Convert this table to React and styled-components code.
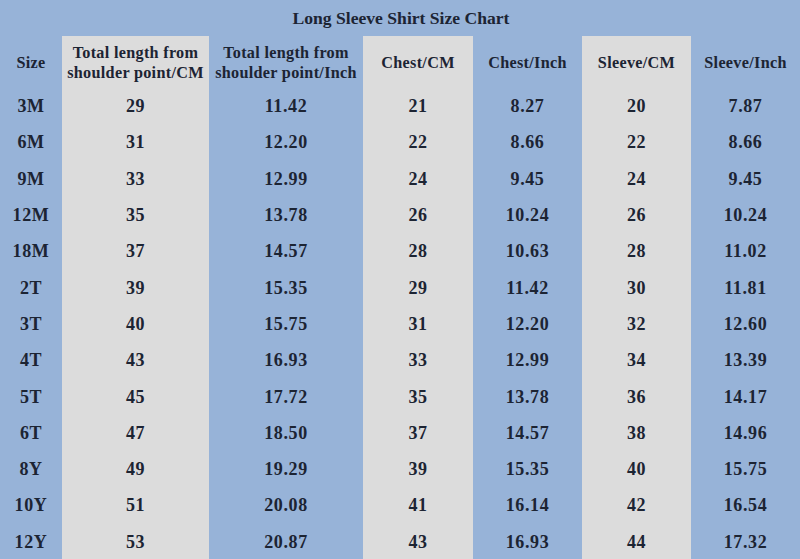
import React from "react";
import styled, { createGlobalStyle } from "styled-components";

const GlobalStyle = createGlobalStyle`
  html, body {
    margin: 0;
    padding: 0;
    background: #97b3d8;
  }
`;

const Chart = styled.div`
  width: 800px;
  height: 559px;
  background: #97b3d8;
  color: #1c2433;
  font-family: "Liberation Serif", "Times New Roman", serif;
  font-weight: bold;
  overflow: hidden;
`;

const Title = styled.div`
  height: 36px;
  display: flex;
  align-items: center;
  justify-content: center;
  font-size: 17.6px;
  padding-left: 2px;
  padding-top: 1px;
  box-sizing: border-box;
`;

const Grid = styled.div`
  display: grid;
  grid-template-columns: 62px 147px 154px 110px 109px 109px 109px;
  grid-template-rows: 52px repeat(13, 36.3px);
`;

const Cell = styled.div`
  display: flex;
  align-items: center;
  justify-content: center;
  text-align: center;
  white-space: nowrap;
  background: ${(p) => (p.$shade ? "#dcdcdc" : "transparent")};
  font-size: ${(p) => (p.$head ? "16.2px" : "18px")};
  line-height: ${(p) => (p.$head ? "20px" : "normal")};
  letter-spacing: ${(p) => (p.$head ? "0.3px" : "0.6px")};
  padding-top: ${(p) => (p.$head ? "2px" : "1px")};
`;

const heads = [
  "Size",
  ["Total length from", "shoulder point/CM"],
  ["Total length from", "shoulder point/Inch"],
  "Chest/CM",
  "Chest/Inch",
  "Sleeve/CM",
  "Sleeve/Inch",
];

const rows = [
  ["3M", "29", "11.42", "21", "8.27", "20", "7.87"],
  ["6M", "31", "12.20", "22", "8.66", "22", "8.66"],
  ["9M", "33", "12.99", "24", "9.45", "24", "9.45"],
  ["12M", "35", "13.78", "26", "10.24", "26", "10.24"],
  ["18M", "37", "14.57", "28", "10.63", "28", "11.02"],
  ["2T", "39", "15.35", "29", "11.42", "30", "11.81"],
  ["3T", "40", "15.75", "31", "12.20", "32", "12.60"],
  ["4T", "43", "16.93", "33", "12.99", "34", "13.39"],
  ["5T", "45", "17.72", "35", "13.78", "36", "14.17"],
  ["6T", "47", "18.50", "37", "14.57", "38", "14.96"],
  ["8Y", "49", "19.29", "39", "15.35", "40", "15.75"],
  ["10Y", "51", "20.08", "41", "16.14", "42", "16.54"],
  ["12Y", "53", "20.87", "43", "16.93", "44", "17.32"],
];

const shaded = (i) => i === 1 || i === 3 || i === 5;

export default function App() {
  return (
    <>
      <GlobalStyle />
      <Chart>
        <Title>Long Sleeve Shirt Size Chart</Title>
        <Grid>
          {heads.map((h, i) => (
            <Cell key={"h" + i} $head $shade={shaded(i)}>
              {Array.isArray(h) ? (
                <span>
                  {h[0]}
                  <br />
                  {h[1]}
                </span>
              ) : (
                h
              )}
            </Cell>
          ))}
          {rows.map((r, ri) =>
            r.map((v, ci) => (
              <Cell key={ri + "-" + ci} $shade={shaded(ci)}>
                {v}
              </Cell>
            ))
          )}
        </Grid>
      </Chart>
    </>
  );
}
